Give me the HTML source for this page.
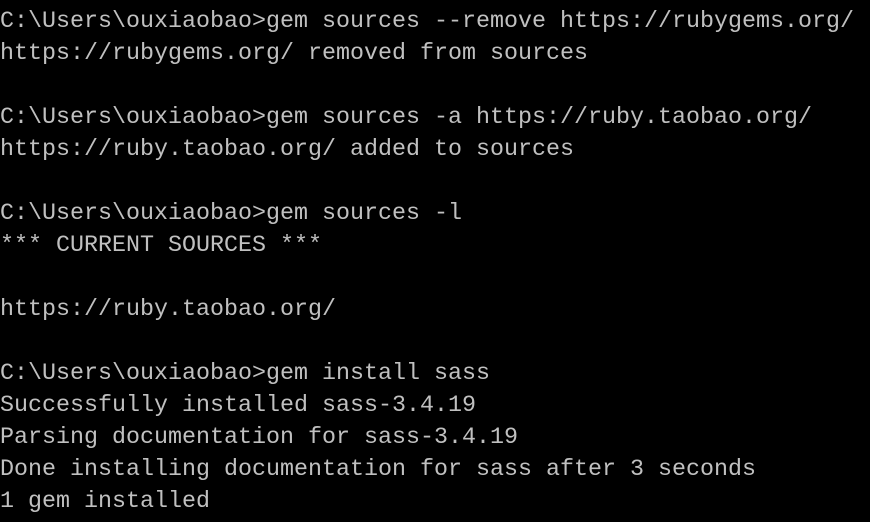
<!DOCTYPE html>
<html><head><meta charset="utf-8"><style>
html,body{margin:0;padding:0;background:#000;width:870px;height:522px;overflow:hidden}
pre{margin:0;padding:6px 0 0 0;font-family:"Liberation Mono",monospace;font-size:23.33px;line-height:32px;color:#c0c0c0;white-space:pre}
</style></head><body><pre>C:\Users\ouxiaobao&gt;gem sources --remove https://rubygems.org/
https://rubygems.org/ removed from sources

C:\Users\ouxiaobao&gt;gem sources -a https://ruby.taobao.org/
https://ruby.taobao.org/ added to sources

C:\Users\ouxiaobao&gt;gem sources -l
*** CURRENT SOURCES ***

https://ruby.taobao.org/

C:\Users\ouxiaobao&gt;gem install sass
Successfully installed sass-3.4.19
Parsing documentation for sass-3.4.19
Done installing documentation for sass after 3 seconds
1 gem installed</pre></body></html>
